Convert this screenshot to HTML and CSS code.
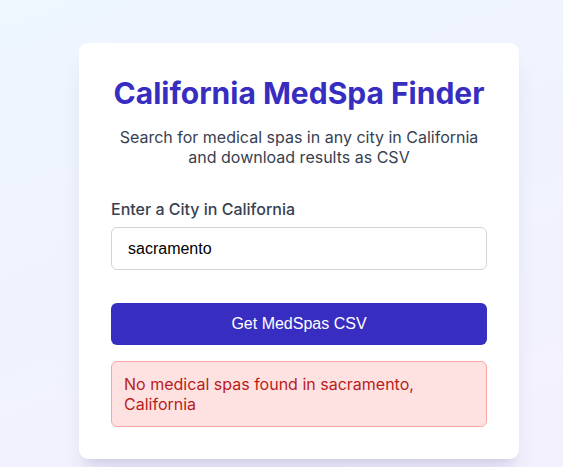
FILE: index.html
```html
<!DOCTYPE html>
<html lang="en">
<head>
<meta charset="utf-8">
<title>California MedSpa Finder</title>
<link rel="stylesheet" href="styles.css">
</head>
<body>
  <main class="page">
    <section class="card">
      <h1 class="title">California MedSpa Finder</h1>
      <p class="subtitle">Search for medical spas in any city in California and download results as CSV</p>
      <form class="form">
        <label class="label" for="city">Enter a City in California</label>
        <input class="input" id="city" type="text" value="sacramento">
        <button class="button" type="button">Get MedSpas CSV</button>
      </form>
      <div class="error">No medical spas found in sacramento, California</div>
    </section>
  </main>
</body>
</html>
```

FILE: styles.css
```css
* { box-sizing: border-box; }
html, body { margin: 0; height: 100%; }
body {
  font-family: "Inter", "Liberation Sans", sans-serif;
  background: linear-gradient(160deg, #eef6ff 0%, #f0f3fe 50%, #f4f1fe 100%);
  overflow: hidden;
}
.page {
  padding: 43px 0 0 79px;
}
.card {
  width: 440px;
  background: #ffffff;
  border-radius: 9px;
  padding: 32px;
  box-shadow: 0 20px 25px -5px rgba(40, 40, 110, 0.10), 0 8px 10px -6px rgba(40, 40, 110, 0.10);
}
.title {
  margin: 0 0 16px;
  font-size: 30px;
  font-weight: 700;
  line-height: normal;
  color: #372dc0;
  text-align: center;
}
.subtitle {
  margin: 0 0 32px;
  font-size: 16px;
  line-height: normal;
  color: #374151;
  text-align: center;
}
.form {
  display: flex;
  flex-direction: column;
}
.label {
  font-size: 16px;
  font-weight: 500;
  color: #374151;
  line-height: normal;
  margin-bottom: 8px;
}
.input {
  font-family: "Liberation Sans", Arial, sans-serif;
  font-size: 16px;
  line-height: 19px;
  color: #000;
  padding: 11px 16px;
  border: 1px solid #d1d5db;
  border-radius: 6px;
  background: #fff;
  margin-bottom: 33px;
}
.button {
  font-family: "Liberation Sans", Arial, sans-serif;
  font-size: 16px;
  line-height: 18px;
  color: #fff;
  background: #372dc0;
  border: none;
  border-radius: 6px;
  padding: 12px 16px;
}
.error {
  margin-top: 16px;
  background: #fee2e2;
  border: 1px solid #fca5a5;
  border-radius: 6px;
  color: #b91c1c;
  font-size: 16px;
  line-height: normal;
  padding: 12px;
}
```
